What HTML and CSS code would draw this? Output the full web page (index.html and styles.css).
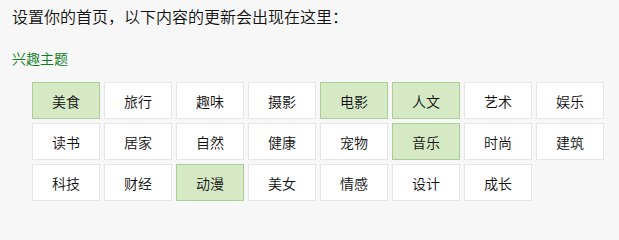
FILE: index.html
```html
<!DOCTYPE html>
<html lang="zh">
<head>
<meta charset="utf-8">
<link rel="stylesheet" href="styles.css">
</head>
<body>
<div class="page">
  <h1 class="title">设置你的首页，以下内容的更新会出现在这里：</h1>
  <h2 class="section">兴趣主题</h2>
  <div class="tags">
    <span class="tag on">美食</span>
    <span class="tag">旅行</span>
    <span class="tag">趣味</span>
    <span class="tag">摄影</span>
    <span class="tag on">电影</span>
    <span class="tag on">人文</span>
    <span class="tag">艺术</span>
    <span class="tag">娱乐</span>
    <span class="tag">读书</span>
    <span class="tag">居家</span>
    <span class="tag">自然</span>
    <span class="tag">健康</span>
    <span class="tag">宠物</span>
    <span class="tag on">音乐</span>
    <span class="tag">时尚</span>
    <span class="tag">建筑</span>
    <span class="tag">科技</span>
    <span class="tag">财经</span>
    <span class="tag on">动漫</span>
    <span class="tag">美女</span>
    <span class="tag">情感</span>
    <span class="tag">设计</span>
    <span class="tag">成长</span>
  </div>
</div>
</body>
</html>
```
FILE: styles.css
```css
html, body {
  margin: 0;
  padding: 0;
  background: #f7f7f7;
}
body {
  font-family: "Noto Sans CJK SC", "Noto Sans", sans-serif;
  font-weight: 350;
  color: #111;
}
.page {
  padding: 4px 12px 0 12px;
}
.title {
  margin: 0;
  font-size: 16px;
  font-weight: 350;
  line-height: 24px;
  color: #111;
}
.section {
  margin: 20px 0 0 0;
  font-size: 14px;
  font-weight: 350;
  line-height: 20px;
  color: #0b7d1c;
}
.tags {
  display: grid;
  grid-template-columns: repeat(8, 68px);
  grid-auto-rows: 37px;
  gap: 4px;
  margin: 14px 0 0 20px;
}
.tag {
  box-sizing: border-box;
  display: flex;
  align-items: center;
  justify-content: center;
  background: #fff;
  border: 1px solid #e6e6e6;
  font-size: 14px;
  color: #111;
}
.tag.on {
  background: #d6e9c5;
  border-color: #a9cf96;
}
```
